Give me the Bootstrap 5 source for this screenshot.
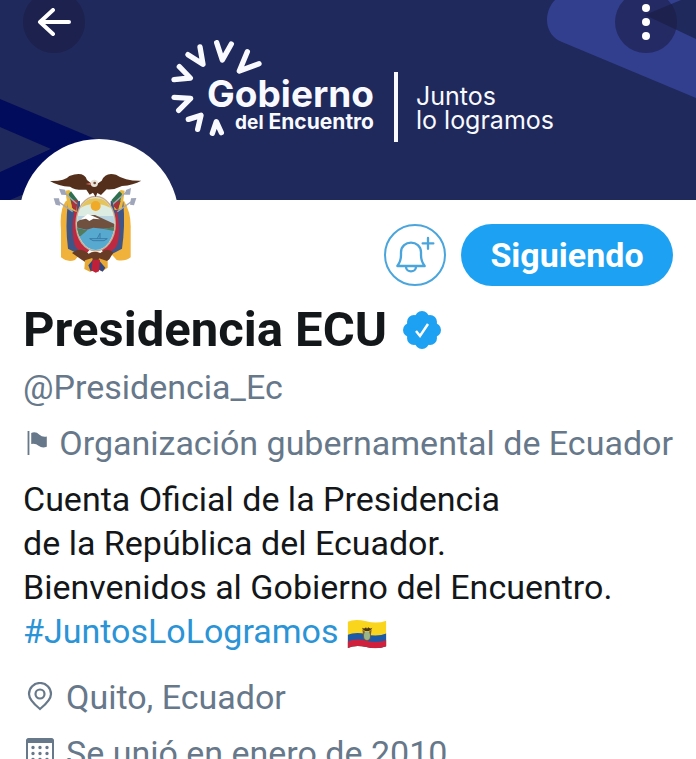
<!DOCTYPE html>
<html lang="es">
<head>
<meta charset="utf-8">
<meta name="viewport" content="width=device-width, initial-scale=1">
<title>Presidencia ECU</title>
<link href="https://cdn.jsdelivr.net/npm/bootstrap@5.3.0/dist/css/bootstrap.min.css" rel="stylesheet">
<style>
  body { font-family: Roboto, "Liberation Sans", sans-serif; font-size: 34px; line-height: 44px; color: #14171a; background: #fff; }
  .screen { height: 100vh; }
  .banner { height: 200px; background: #1f295b; }
  .round-btn { width: 62px; height: 62px; top: -9px; background: rgba(26, 29, 70, .6); }
  .back-btn { left: 23px; }
  .more-btn { right: 19px; }
  .lockup { padding-top: 40px; padding-left: 28px; color: #f8faff; }
  .brand { width: 204px; height: 100px; font-family: Inter, sans-serif; font-weight: 700; padding-top: 36px; }
  .brand-top { font-size: 37px; line-height: 36px; }
  .brand-sub { font-size: 21px; line-height: 20px; }
  .brand-sub small { font-size: 19px; }
  .motto { font-family: Inter, sans-serif; font-size: 25px; line-height: 24px; border-left: 4px solid #f8faff; margin: 32px 0 0 20px; padding: 12px 0 10px 18px; height: 70px; }
  .profile { padding: 0 23px; }
  .avatar { width: 160px; height: 160px; margin: -61px 0 0 -4px; background: #fff; }
  .actions { padding-top: 24px; gap: 15px; }
  .bell-btn { width: 62px; height: 62px; border: 2px solid #4aa5dc; background: #fff; }
  .follow-btn { width: 212px; height: 62px; background: #1da1f2; color: #fff; font-size: 34px; font-weight: 700; }
  .display-name { font-size: 49px; line-height: 54px; font-weight: 700; gap: 16px; }
  .muted { color: #66788a; }
  .tag { color: #2b94d6; }
  .icon-cell { width: 32px; }
  .meta { gap: 11px; }
  .place { margin-top: 22px; }
  .category { gap: 7px; }
</style>
</head>
<body>
<div class="screen overflow-hidden">
  <header class="banner position-relative overflow-hidden">
    <svg class="position-absolute top-0 start-0" width="200" height="200" aria-hidden="true">
      <path d="M0 99L112 146L0 200Z" fill="#020c5c"/><path d="M0 127L51 149L0 173Z" fill="#1f295b"/>
      <path d="M0 172L60 145L40 200H0Z" fill="#020c5c"/><path d="M10 200L24 194V200Z" fill="#1f295b"/>
    </svg>
    <svg class="position-absolute top-0 end-0" width="166" height="110" aria-hidden="true">
      <path d="M25 0C13 12 14 35 32 42L166 98V0Z" fill="#323f8e"/><path d="M115 15L151 0H166V39Z" fill="#1f295b"/>
    </svg>
    <div class="lockup d-flex justify-content-center">
      <div class="brand position-relative text-end">
        <svg class="position-absolute top-0 start-0" width="94" height="100" viewBox="30 30 282 300" fill="none" stroke="#f8faff" stroke-width="16" stroke-linecap="round" stroke-linejoin="round" aria-hidden="true">
          <path d="M170 38L187 90L214 42M120 51L129 103L84 74M58 110L91 144L42 149M42 202L92 205L56 241M85 268L123 256L113 298M157 310L169 275L184 308M262 65L238 123L297 101"/>
        </svg>
        <div class="brand-top">Gobierno</div>
        <div class="brand-sub"><small>del</small> Encuentro</div>
      </div>
      <div class="motto text-nowrap">Juntos<br>lo logramos</div>
    </div>
    <button class="round-btn back-btn btn border-0 rounded-circle p-0 position-absolute d-flex align-items-center justify-content-center" aria-label="Atrás">
      <svg width="34" height="28" fill="none" stroke="#fff" stroke-width="4" stroke-linecap="round" stroke-linejoin="round"><path d="M16 2L3 14L16 26M3 14H32"/></svg>
    </button>
    <button class="round-btn more-btn btn border-0 rounded-circle p-0 position-absolute d-flex align-items-center justify-content-center" aria-label="Más opciones">
      <svg width="10" height="38" fill="#fff"><circle cx="5" cy="5" r="4"/><circle cx="5" cy="19" r="4"/><circle cx="5" cy="33" r="4"/></svg>
    </button>
  </header>

  <main class="profile">
    <div class="d-flex justify-content-between">
      <div class="avatar rounded-circle position-relative d-flex align-items-center justify-content-center">
        <svg width="110" height="125" viewBox="12 -7 330 375" role="img" aria-label="Escudo del Ecuador">
          <path d="M78 124Q58 150 63 210V294Q82 310 105 302L122 282L108 130Z" fill="#f0b23a"/>
          <path d="M252 124Q274 160 272 210V294Q254 308 230 302L212 282L224 130Z" fill="#f0b23a"/>
          <path d="M84 128Q75 200 84 268L120 286V125Z" fill="#3e5585"/>
          <path d="M250 128Q256 200 246 268L212 286V125Z" fill="#3e5585"/>
          <path d="M104 150Q90 220 106 262L134 290L150 270L112 220V140Z" fill="#bd2941"/>
          <path d="M228 145Q248 220 228 264L198 290L184 270L222 220Z" fill="#bd2941"/>
          <path d="M76 94L84 148L110 158L112 128L88 92Z" fill="#e7b940"/><path d="M86 104L100 151L116 126L93 96Z" fill="#2f7050"/>
          <path d="M254 94L246 150L224 152L218 126L242 92Z" fill="#e7b940"/><path d="M246 103L235 150L214 123L238 96Z" fill="#2f7050"/>
          <path d="M94 122L113 122L109 155L96 145ZM225 125L242 126L232 152L220 140Z" fill="#a9323b"/>
          <path d="M48 122L98 157M66 93L110 133M282 121L232 157M266 92L220 133" stroke="#a4a9b4" stroke-width="4"/>
          <path d="M41 117L57 117L61 139L47 136ZM57 88L75 91L79 107L64 106ZM289 116L273 117L270 136L282 138ZM273 86L258 92L255 106L270 106Z" fill="#a0a6b9"/>
          <path d="M96 281Q120 260 146 283Q160 272 181 281Q202 262 220 280L208 300Q185 320 165 305Q145 318 125 301Z" fill="#693d25"/>
          <path d="M135 303L157 296L164 331L151 338L133 329Z" fill="#e8a935"/><path d="M177 297L203 306L203 325L188 335L171 330Z" fill="#e8a935"/>
          <path d="M145 318L160 300L166 336L151 334ZM178 304L196 325L188 337L174 330Z" fill="#36477e"/><path d="M158 301H180L177 336L167 340L154 333Z" fill="#c02038"/>
          <ellipse cx="167" cy="193" rx="61" ry="84" fill="#c9a98c"/><ellipse cx="167" cy="193" rx="57" ry="80" fill="#dcece2"/>
          <clipPath id="oval"><ellipse cx="167" cy="193" rx="56" ry="79"/></clipPath>
          <g clip-path="url(#oval)">
            <path d="M108 155Q165 112 226 155V138Q165 95 108 138Z" fill="#e6c45d"/><circle cx="167" cy="140" r="15" fill="#f1a928"/>
            <path d="M108 170H226V207H108Z" fill="#b7d3df"/>
            <path d="M108 190L140 168L165 167L226 195V214H108Z" fill="#70503f"/><path d="M119 182L143 164L160 171L180 180L160 178L148 185L138 178Z" fill="#fff"/>
            <path d="M108 204L140 211L160 205L190 208L226 204V280H108Z" fill="#58a9cf"/><path d="M108 205L142 213L121 231H108Z" fill="#537b5e"/><path d="M188 208L226 204V216Z" fill="#537b5e"/>
            <path d="M149 238H202L192 244H159ZM171 239L180 222V239" fill="none" stroke="#397baa" stroke-width="3"/>
          </g>
          <path d="M30 65Q75 66 88 50Q132 34 141 62L156 74H171L185 64Q196 37 228 46Q255 65 304 64Q280 77 246 80Q223 92 200 90L183 107L172 101L167 113L159 100L149 106L139 91Q108 94 90 82Q55 81 30 65Z" fill="#54301c"/>
          <circle cx="163" cy="72" r="11" fill="#e8e4d9"/><circle cx="164" cy="71" r="4" fill="#6e4b38"/><path d="M153 70L137 74L152 77Z" fill="#db6b62"/>
        </svg>
      </div>
      <div class="actions d-flex align-items-start">
        <button class="bell-btn btn rounded-circle p-0 d-flex align-items-center justify-content-center" aria-label="Notificaciones">
          <svg width="40" height="38" viewBox="75 58 120 114" fill="none" stroke="#4aa5dc" stroke-width="7" stroke-linejoin="round" stroke-linecap="round"><path d="M82 148Q93 134 93 116V107C93 68 153 68 153 107V116Q153 134 164 148ZM108 150C108 169 138 169 138 150M174 64V96M158 80H190"/></svg>
        </button>
        <button class="follow-btn btn border-0 rounded-pill p-0">Siguiendo</button>
      </div>
    </div>

    <h1 class="display-name d-flex align-items-center mt-1 mb-2">Presidencia ECU
      <svg width="38" height="38" viewBox="0 0 38 38" role="img" aria-label="Cuenta verificada"><g fill="#1da1f2"><circle cx="19" cy="19" r="16"/><circle cx="19" cy="7" r="7"/><circle cx="27" cy="11" r="7"/><circle cx="31" cy="19" r="7"/><circle cx="27" cy="27" r="7"/><circle cx="19" cy="31" r="7"/><circle cx="11" cy="27" r="7"/><circle cx="7" cy="19" r="7"/><circle cx="11" cy="11" r="7"/></g><path d="M13 20L17 25L25 13" fill="none" stroke="#fff" stroke-width="2.5"/></svg>
    </h1>
    <div class="muted">@Presidencia_Ec</div>
    <div class="category muted d-flex align-items-center text-nowrap my-2 py-1">
      <svg class="icon-cell" height="28" viewBox="0 0 32 28" fill="#66788a" aria-hidden="true"><path d="M5 1H7V27H5ZM9 3Q14 1 18 5Q21 8 26 7V18Q21 20 17 17Q14 14 9 15Z"/></svg>
      <span>Organización gubernamental de Ecuador</span>
    </div>
    <p class="mb-0">Cuenta Oficial de la Presidencia<br>de la República del Ecuador.<br>Bienvenidos al Gobierno del Encuentro.<br><a class="tag text-decoration-none" href="#">#JuntosLoLogramos</a>
      <svg width="40" height="30" viewBox="0 0 120 90" role="img" aria-label="Bandera de Ecuador"><clipPath id="flag"><path d="M2 8Q24 -2 58 7Q90 15 118 5V82Q90 92 58 84Q26 76 2 87Z"/></clipPath><g clip-path="url(#flag)"><path d="M0 0H120V90H0Z" fill="#f9d51d"/><path d="M0 48Q28 37 58 46Q90 55 120 43V90H0Z" fill="#1c5aa8"/><path d="M0 68Q28 57 58 65Q90 74 120 63V90H0Z" fill="#cf203d"/></g><path d="M46 31L60 44L74 31L70 60L60 66L50 60Z" fill="#80602e"/><ellipse cx="60" cy="50" rx="9" ry="13" fill="#9bb58a"/><path d="M45 26Q53 31 57 25L60 29L64 25Q69 31 76 26Q70 37 60 36Q50 37 45 26Z" fill="#49351f"/></svg>
    </p>
    <div class="meta place muted d-flex align-items-center">
      <svg class="icon-cell" height="30" viewBox="0 0 32 30" fill="none" stroke="#66788a" stroke-width="2.2" aria-hidden="true"><path d="M17 27C12 23 6 18 6 12A11 11 0 0 1 28 12C28 18 22 23 17 27Z"/><circle cx="17" cy="12" r="4.5"/></svg>
      <span>Quito, Ecuador</span>
    </div>
    <div class="meta muted d-flex align-items-center mt-2 pt-1">
      <svg class="icon-cell" height="30" viewBox="0 0 32 30" aria-hidden="true"><rect x="4" y="1" width="26" height="28" rx="3" fill="none" stroke="#66788a" stroke-width="2"/><path d="M3 5V3Q3 0 6 0H28Q31 0 31 3V5Z" fill="#66788a"/><path d="M10 9.500H25M10 15.500H25M10 21.500H25" stroke="#66788a" stroke-width="3.400" stroke-linecap="round" stroke-dasharray="0 7"/></svg>
      <span>Se unió en enero de 2010</span>
    </div>
  </main>
</div>
<script src="https://cdn.jsdelivr.net/npm/bootstrap@5.3.0/dist/js/bootstrap.bundle.min.js"></script>
</body>
</html>
